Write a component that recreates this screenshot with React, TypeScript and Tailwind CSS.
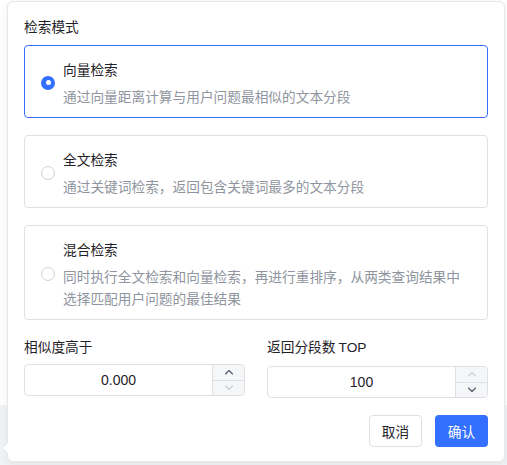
import { useState } from 'react'

type Mode = 'vector' | 'fulltext' | 'hybrid'

const modes: { id: Mode; title: string; desc: string }[] = [
  { id: 'vector', title: '向量检索', desc: '通过向量距离计算与用户问题最相似的文本分段' },
  { id: 'fulltext', title: '全文检索', desc: '通过关键词检索，返回包含关键词最多的文本分段' },
  {
    id: 'hybrid',
    title: '混合检索',
    desc: '同时执行全文检索和向量检索，再进行重排序，从两类查询结果中选择匹配用户问题的最佳结果',
  },
]

function Chevron({ dir, active }: { dir: 'up' | 'down'; active: boolean }) {
  return (
    <svg
      width="10"
      height="6"
      viewBox="0 0 10 6"
      fill="none"
      stroke={active ? '#4e5969' : '#c9cdd4'}
      strokeWidth="1.1"
      strokeLinecap="round"
      strokeLinejoin="round"
    >
      {dir === 'up' ? <polyline points="1.5 5 5 1.5 8.5 5" /> : <polyline points="1.5 1 5 4.5 8.5 1" />}
    </svg>
  )
}

function NumberInput({ value, upActive, downActive }: { value: string; upActive: boolean; downActive: boolean }) {
  return (
    <div className="flex h-8 rounded-[4px] border border-[#dee0e3] bg-white overflow-hidden">
      <div className="flex-1 flex items-center justify-center text-sm text-[#1f2329] font-['Liberation_Sans',sans-serif]">
        {value}
      </div>
      <div className="w-8 flex flex-col border-l border-[#dee0e3] bg-[#f5f6f8]">
        <div className="flex-1 flex items-center justify-center border-b border-[#dee0e3]">
          <Chevron dir="up" active={upActive} />
        </div>
        <div className="flex-1 flex items-center justify-center">
          <Chevron dir="down" active={downActive} />
        </div>
      </div>
    </div>
  )
}

export default function App() {
  const [mode, setMode] = useState<Mode>('vector')

  return (
    <div className="relative h-[465px] w-[507px] flex flex-col bg-white font-['Noto_Sans_CJK_SC',sans-serif]">
      {/* page behind the popover */}
      <div className="h-[405px] bg-white" />
      <div className="flex-1 bg-[#f2f3f5]" />

      {/* popover */}
      <div className="absolute left-[7px] top-[1px] w-[498px] h-[461px] rounded-[6px] border border-[#e6e8eb] bg-white shadow-[0_2px_8px_rgba(31,35,41,0.08)] px-4 pt-[13px]">
        {/* arrow */}
        <div className="absolute -left-[6px] top-[440px] w-0 h-0 border-y-[6px] border-y-transparent border-r-[6px] border-r-[#e6e8eb]" />
        <div className="absolute -left-[5px] top-[440px] w-0 h-0 border-y-[6px] border-y-transparent border-r-[6px] border-r-white" />

        <div className="text-[13.7px] leading-[22px] text-[#1f2329] mb-[8px]">检索模式</div>

        <div className="flex flex-col gap-[17px]">
          {modes.map((m) => {
            const selected = mode === m.id
            return (
              <button
                key={m.id}
                onClick={() => setMode(m.id)}
                className={
                  'flex items-center text-left rounded-[4px] border pl-4 pr-4 pt-3 pb-[10px] ' +
                  (selected ? 'border-[#3370ff]' : 'border-[#dee0e3]')
                }
              >
                {selected ? (
                  <span className="w-[14px] h-[14px] shrink-0 rounded-full bg-[#3370ff] flex items-center justify-center">
                    <span className="w-[5px] h-[5px] rounded-full bg-white" />
                  </span>
                ) : (
                  <span className="w-[14px] h-[14px] shrink-0 rounded-full border border-[#d0d3d6] bg-white" />
                )}
                <div className="ml-2">
                  <div className="text-[13.7px] leading-[22px] text-[#1f2329] mb-[5px]">{m.title}</div>
                  <div className="text-[13.7px] leading-[22px] text-[#8f959e]">{m.desc}</div>
                </div>
              </button>
            )
          })}
        </div>

        <div className="grid grid-cols-2 gap-[22px] mt-[15px]">
          <div>
            <div className="text-[13.7px] leading-[22px] text-[#1f2329] mb-[7px]">相似度高于</div>
            <NumberInput value="0.000" upActive downActive={false} />
          </div>
          <div>
            <div className="text-[13.7px] leading-[22px] text-[#1f2329] mb-[7px]">
              返回分段数 <span className="font-['Liberation_Sans',sans-serif]">TOP</span>
            </div>
            <NumberInput value="100" upActive={false} downActive />
          </div>
        </div>

        <div className="flex justify-end gap-[13px] mt-[17px]">
          <button className="w-[53px] h-8 rounded-[4px] border border-[#dee0e3] bg-white text-[13.7px] text-[#1f2329]">
            取消
          </button>
          <button className="w-[53px] h-8 rounded-[4px] bg-[#3370ff] text-[13.7px] text-white">确认</button>
        </div>
      </div>
    </div>
  )
}
